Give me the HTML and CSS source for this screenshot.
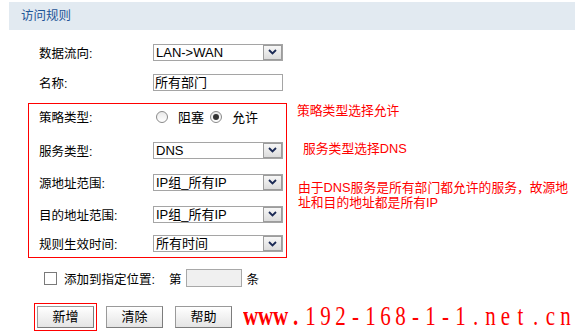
FILE: index.html
```html
<!DOCTYPE html>
<html>
<head>
<meta charset="utf-8">
<link rel="stylesheet" href="styles.css">
</head>
<body>
<div class="title-bar">访问规则</div>
<div class="content">
  <div class="row top-row">
    <span class="label">数据流向:</span>
    <div class="select"><span class="val">LAN-&gt;WAN</span><span class="arrow"><svg width="9" height="6" viewBox="0 0 9 6"><path d="M1 1 L4.5 4.5 L8 1" fill="none" stroke="#1b2a55" stroke-width="1.8"/></svg></span></div>
  </div>
  <div class="row top-row">
    <span class="label">名称:</span>
    <div class="textbox">所有部门</div>
  </div>
  <div class="policy-area">
    <div class="rule-box">
      <div class="row radio-row">
        <span class="label">策略类型:</span>
        <span class="radio"></span><span class="radio-text">阻塞</span>
        <span class="radio checked"></span><span class="radio-text">允许</span>
      </div>
      <div class="row sel-row">
        <span class="label">服务类型:</span>
        <div class="select"><span class="val">DNS</span><span class="arrow"><svg width="9" height="6" viewBox="0 0 9 6"><path d="M1 1 L4.5 4.5 L8 1" fill="none" stroke="#1b2a55" stroke-width="1.8"/></svg></span></div>
      </div>
      <div class="row sel-row">
        <span class="label">源地址范围:</span>
        <div class="select"><span class="val">IP组_所有IP</span><span class="arrow"><svg width="9" height="6" viewBox="0 0 9 6"><path d="M1 1 L4.5 4.5 L8 1" fill="none" stroke="#1b2a55" stroke-width="1.8"/></svg></span></div>
      </div>
      <div class="row sel-row">
        <span class="label">目的地址范围:</span>
        <div class="select"><span class="val">IP组_所有IP</span><span class="arrow"><svg width="9" height="6" viewBox="0 0 9 6"><path d="M1 1 L4.5 4.5 L8 1" fill="none" stroke="#1b2a55" stroke-width="1.8"/></svg></span></div>
      </div>
      <div class="row sel-row last">
        <span class="label">规则生效时间:</span>
        <div class="select"><span class="val">所有时间</span><span class="arrow"><svg width="9" height="6" viewBox="0 0 9 6"><path d="M1 1 L4.5 4.5 L8 1" fill="none" stroke="#1b2a55" stroke-width="1.8"/></svg></span></div>
      </div>
    </div>
    <div class="notes">
      <p class="note note1">策略类型选择允许</p>
      <p class="note note2">服务类型选择DNS</p>
      <p class="note note3">由于DNS服务是所有部门都允许的服务，故源地<br>址和目的地址都是所有IP</p>
    </div>
  </div>
  <div class="row insert-row">
    <span class="checkbox"></span>
    <span class="insert-label">添加到指定位置:</span>
    <span class="nth">第</span>
    <span class="pos-input"></span>
    <span class="unit">条</span>
  </div>
  <div class="button-row">
    <div class="highlight"><span class="btn">新增</span></div>
    <span class="btn btn-clear">清除</span>
    <span class="btn btn-help">帮助</span>
    <span class="watermark"><b class="ch">w</b><b class="ch">w</b><b class="ch">w</b><b class="ch">.</b><span class="ch">1</span><span class="ch">9</span><span class="ch">2</span><span class="ch">-</span><span class="ch">1</span><span class="ch">6</span><span class="ch">8</span><span class="ch">-</span><span class="ch">1</span><span class="ch">-</span><span class="ch">1</span><span class="ch">.</span><span class="ch">n</span><span class="ch">e</span><span class="ch">t</span><span class="ch">.</span><span class="ch">c</span><span class="ch">n</span></span>
  </div>
</div>
</body>
</html>
```
FILE: styles.css
```css
* { box-sizing: border-box; }
html, body { margin: 0; padding: 0; background: #fff; }
body {
  font-family: "Liberation Sans", "Noto Sans CJK SC", sans-serif;
  font-size: 12.5px;
  color: #000;
  width: 575px;
  height: 332px;
  overflow: hidden;
}
.title-bar {
  margin: 2px 0 0 9px;
  height: 28px;
  line-height: 28px;
  padding-left: 12px;
  background: #e2eaf1;
  color: #1f5597;
}
.content { padding: 7px 0 0 28px; }
.row { display: flex; align-items: center; }
.top-row { height: 30px; padding-left: 11px; }
.label { width: 114px; flex: none; white-space: nowrap; }
.select {
  display: flex;
  width: 130px;
  height: 17px;
  border: 1px solid #a5a5a5;
  background: #fff;
  font-size: 13px;
  line-height: 15px;
}
.select .val { flex: 1; padding-left: 2px; white-space: nowrap; overflow: hidden; }
.select .arrow {
  width: 19px;
  height: 15px;
  border: 1px solid #9c9c9c;
  background: linear-gradient(#f7f7f7, #dcdcdc);
  display: flex;
  align-items: center;
  justify-content: center;
}
.textbox {
  width: 130px;
  height: 17px;
  border: 1px solid #a5a5a5;
  line-height: 15px;
  padding-left: 1px;
  font-size: 13px;
}
.policy-area { display: flex; align-items: flex-start; margin-top: 6px; }
.rule-box { width: 259px; flex: none; border: 1px solid #ff0000; padding-left: 10px; }
.radio-row { height: 25px; margin-bottom: 5px; }
.sel-row { height: 32px; }
.sel-row.last { height: 27px; }
.radio {
  width: 12px;
  height: 12px;
  border: 1px solid #8a8a8a;
  border-radius: 50%;
  background: linear-gradient(#e9e9e9, #fff);
  margin-left: 3px;
  flex: none;
  display: flex;
  align-items: center;
  justify-content: center;
}
.radio.checked::after {
  content: "";
  width: 6px;
  height: 6px;
  border-radius: 50%;
  background: #333;
}
.radio-text { margin-left: 10px; margin-right: 3px; font-size: 13px; }
.notes { margin-left: 10px; color: #ff0000; font-size: 12.8px; }
.note { margin: 0; line-height: 15px; white-space: nowrap; }
.note1 { margin-top: 0; }
.note2 { margin-top: 23px; padding-left: 6px; }
.note3 { margin-top: 24px; padding-left: 1px; }
.insert-row { height: 30px; margin-top: 5px; padding-left: 16px; }
.checkbox {
  width: 13px;
  height: 13px;
  border: 1px solid #7a7a7a;
  background: #fff;
  flex: none;
}
.insert-label { margin-left: 7px; }
.nth { margin-left: 14px; }
.pos-input {
  width: 56px;
  height: 18px;
  border: 1px solid #a8a8a8;
  background: #f0f0f0;
  margin-left: 4px;
}
.unit { margin-left: 5px; }
.button-row { display: flex; align-items: flex-start; margin-top: 10px; padding-left: 6px; }
.highlight { border: 1px solid #ff0000; padding: 2px; }
.btn {
  display: block;
  width: 57px;
  height: 22px;
  border: 1px solid #9a9a9a;
  border-right-color: #7c7c7c;
  border-bottom-color: #7c7c7c;
  background: linear-gradient(#ffffff, #e4e4e4);
  text-align: center;
  line-height: 20px;
  font-size: 13px;
}
.btn-clear { margin-left: 9px; margin-top: 3px; }
.btn-help { margin-left: 12px; margin-top: 3px; }
.watermark {
  display: flex;
  flex: none;
  width: 440px;
  margin-left: 11px;
  margin-right: -110px;
  margin-top: -1px;
  transform: scaleX(0.75);
  transform-origin: 0 0;
  font-family: "Liberation Serif", serif;
  font-size: 28px;
  line-height: 28px;
  color: #ff0000;
  white-space: nowrap;
}
.watermark .ch { width: 20px; flex: none; text-align: center; font-weight: normal; }
.watermark b.ch { font-weight: bold; }
```
